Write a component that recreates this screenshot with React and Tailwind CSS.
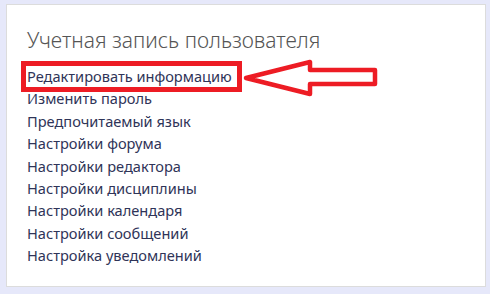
const ITEMS = [
  'Редактировать информацию',
  'Изменить пароль',
  'Предпочитаемый язык',
  'Настройки форума',
  'Настройки редактора',
  'Настройки дисциплины',
  'Настройки календаря',
  'Настройки сообщений',
  'Настройка уведомлений',
];

// red annotation drawn over the first menu item
function Callout() {
  return (
    <>
      <div className="absolute left-[-6px] top-[-4px] w-[221px] h-[31px] border-[5px] border-[#ed1c24]" />
      <svg width="145" height="45" viewBox="0 0 145 45" className="absolute left-[213px] top-[-9px]">
        <polygon
          points="6,22 70,6 70,14 135,14 135,28 70,28 70,38"
          fill="white"
          stroke="#ed1c24"
          strokeWidth="4.5"
          strokeLinejoin="round"
        />
      </svg>
    </>
  );
}

export default function App() {
  return (
    <div className="w-[490px] h-[294px] bg-[#e6e8fa] pt-[4px] pl-[6px]" style={{ fontFamily: '"Noto Sans", "Open Sans", sans-serif' }}>
      <div className="w-[480px] h-[283px] bg-white border border-[#dcdcdc] pt-[22px] pl-[20px]">
        <h1 className="text-[21px] leading-[26px] font-light text-[#555555] mb-[12px]">
          Учетная запись пользователя
        </h1>
        <div className="relative flex flex-col">
          {ITEMS.map((t) => (
            <div key={t} className="text-[14.6px] leading-[22.4px] text-[#2f3458]">{t}</div>
          ))}
          <Callout />
        </div>
      </div>
    </div>
  );
}
